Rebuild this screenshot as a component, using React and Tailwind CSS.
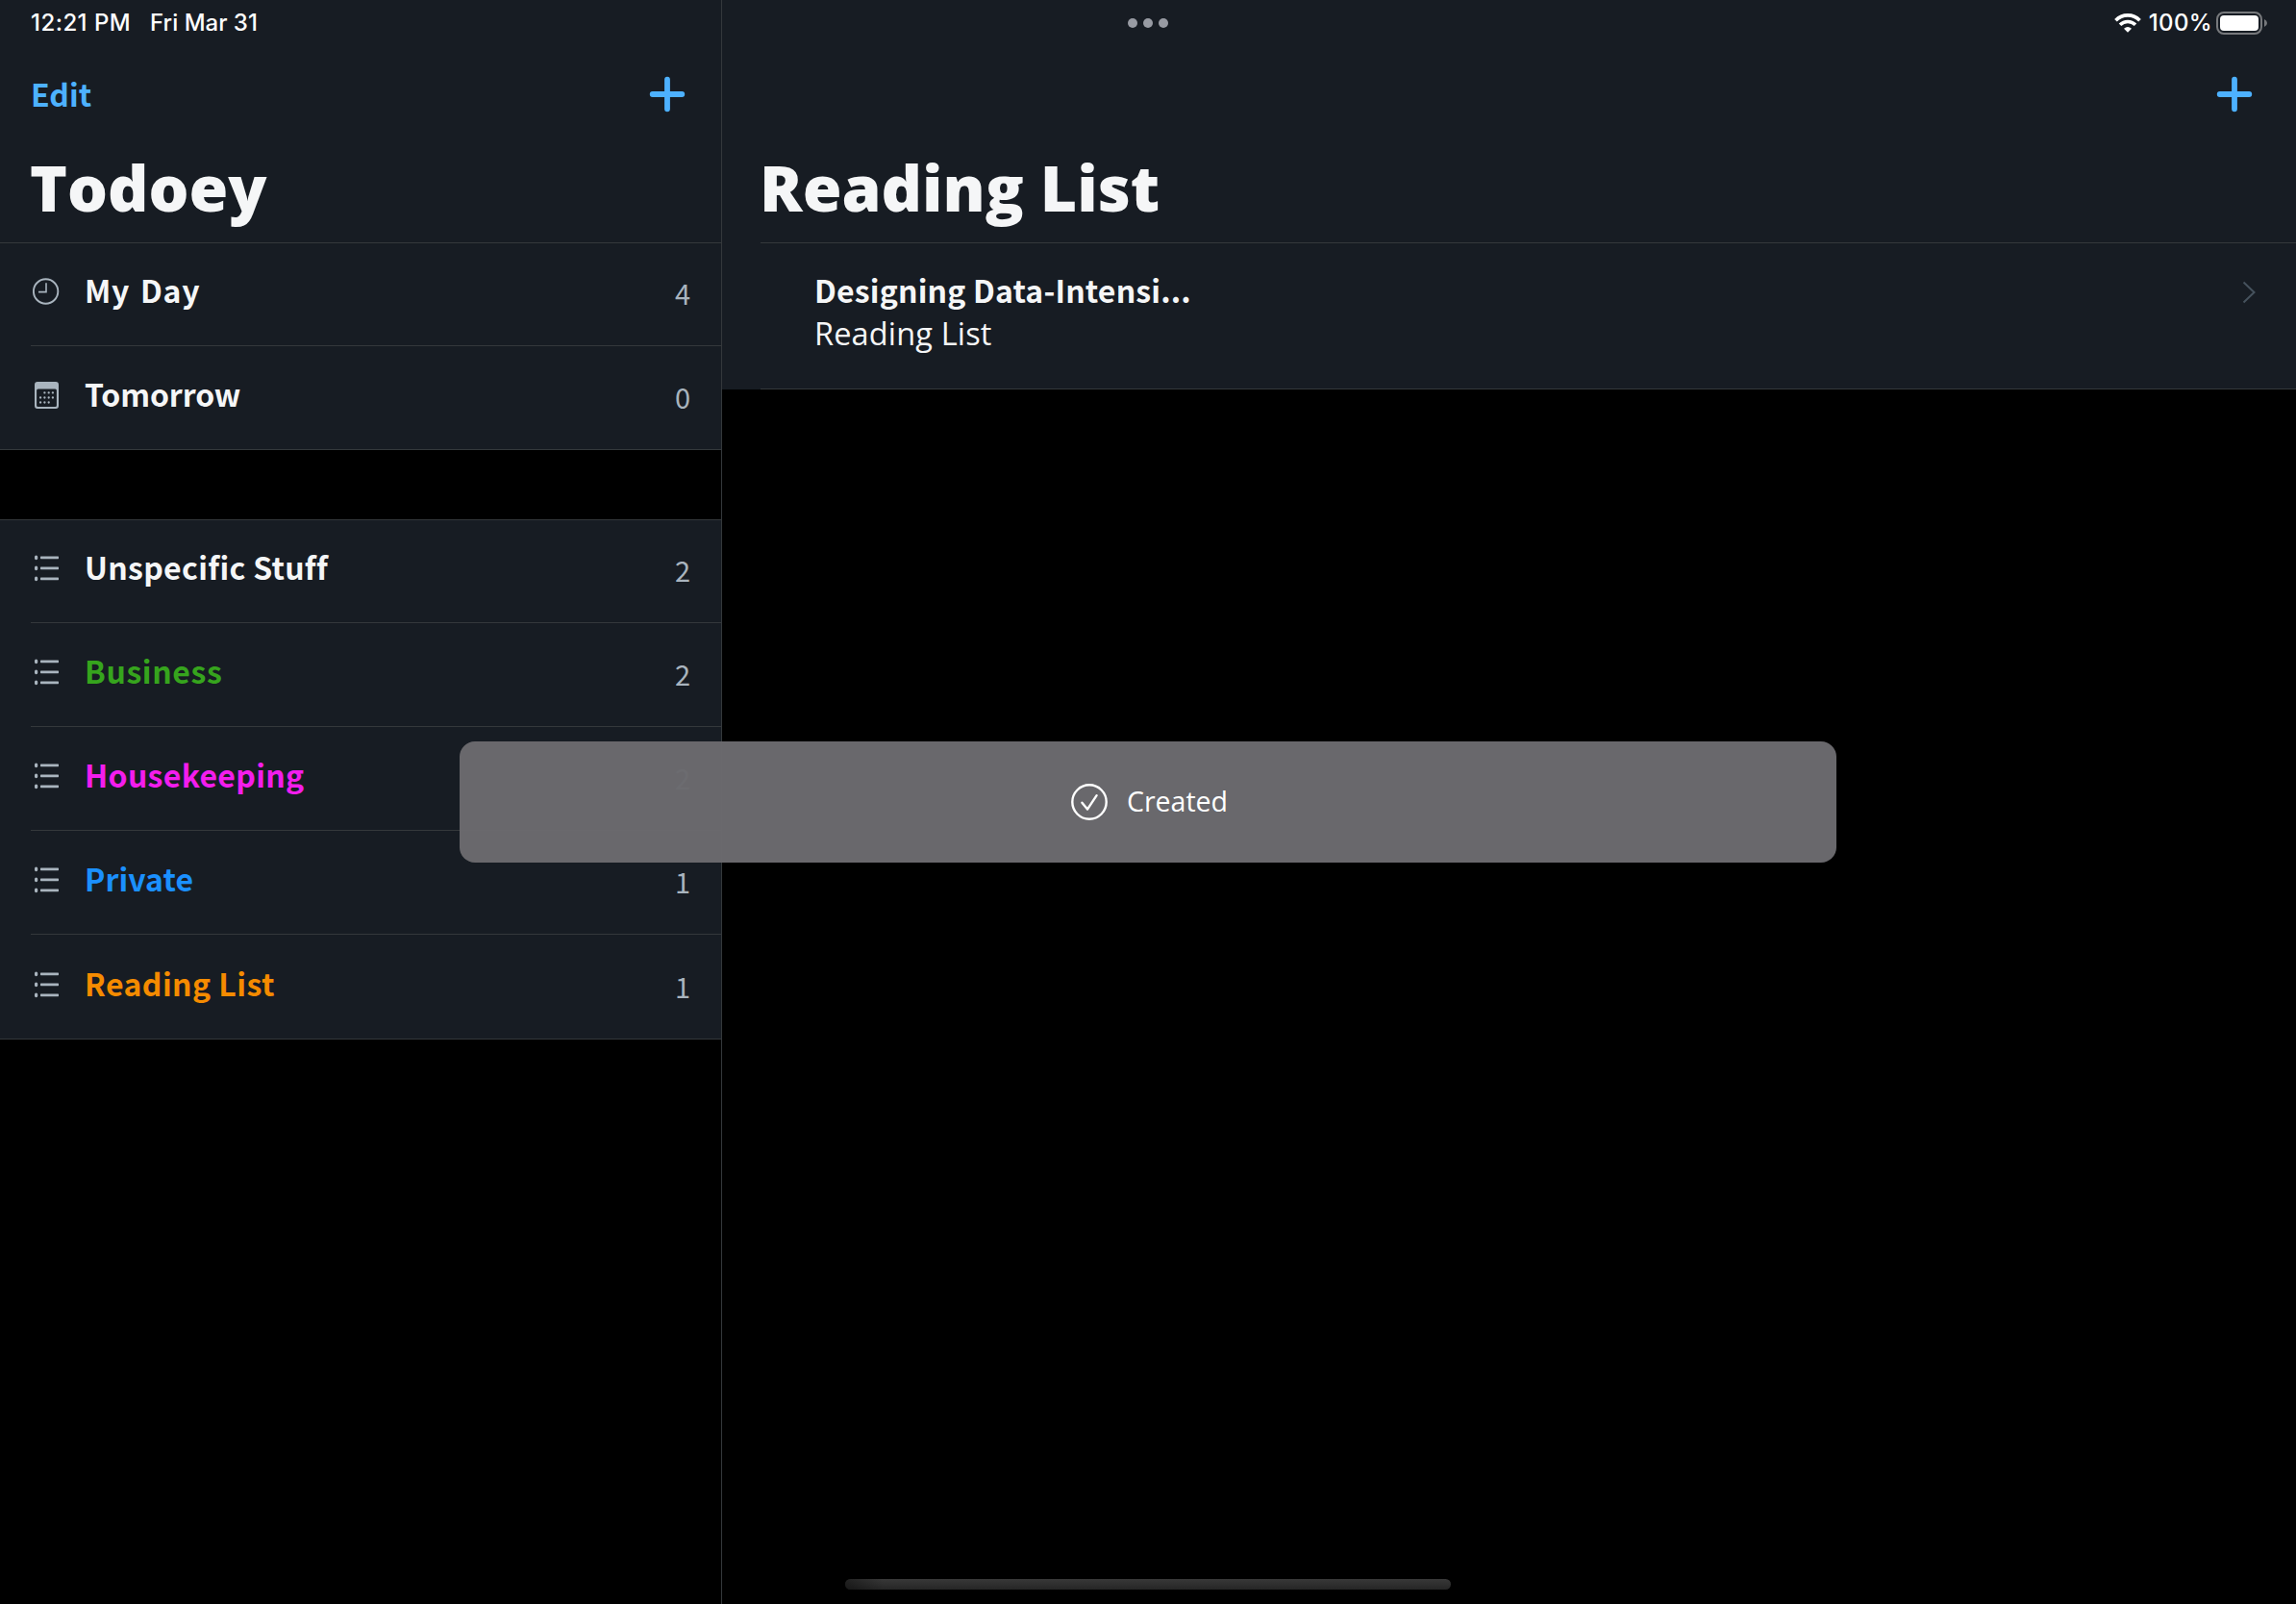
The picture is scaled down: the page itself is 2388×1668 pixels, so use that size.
import React from "react";

const smart = [
  { icon: "clock", label: "My Day", count: 4, height: "h-[107px]", spacing: "tracking-[0.7px] [word-spacing:3px]" },
  { icon: "calendar", label: "Tomorrow", count: 0, height: "h-[108px]", spacing: "tracking-[-0.1px]" },
];

const lists = [
  { label: "Unspecific Stuff", count: 2, color: "text-[#f5f6f7]", height: "h-[107px]", spacing: "tracking-[0.3px]" },
  { label: "Business", count: 2, color: "text-[#36a41d]", height: "h-[108px]", spacing: "tracking-[0.6px]" },
  { label: "Housekeeping", count: 2, color: "text-[#f31ded]", height: "h-[108px]", spacing: "tracking-[0.32px]" },
  { label: "Private", count: 1, color: "text-[#1b90ff]", height: "h-[108px]", spacing: "tracking-[0.1px]" },
  { label: "Reading List", count: 1, color: "text-[#f58b00]", height: "h-[109px]", spacing: "tracking-[0.45px]" },
];

function RowIcon({ name }) {
  const box = "mb-1 h-7 w-7 shrink-0 text-[#a9b4be]";
  if (name === "clock") {
    return (
      <svg className={box} viewBox="0 0 28 28" fill="none" stroke="currentColor">
        <circle cx="13.6" cy="14" r="12.7" strokeWidth="1.9" />
        <path d="M14 5.2V14.6H6" strokeWidth="1.6" />
      </svg>
    );
  }
  if (name === "calendar") {
    const dots = [
      [12.4, 11.4], [16.7, 11.4], [20.9, 11.4],
      [8.1, 16.5], [12.4, 16.5], [16.7, 16.5], [20.9, 16.5],
      [8.1, 21.5], [12.4, 21.5], [16.7, 21.5],
    ];
    return (
      <svg className={box} viewBox="0 0 28 28" fill="currentColor">
        <path
          fillRule="evenodd"
          d="M5 0H24Q27 0 27 3V25Q27 28 24 28H5Q2 28 2 25V3Q2 0 5 0ZM5.6 7.4Q4.1 7.4 4.1 8.9V24.4Q4.1 25.9 5.6 25.9H23.4Q24.9 25.9 24.9 24.4V8.9Q24.9 7.4 23.4 7.4Z"
        />
        {dots.map(([x, y]) => (
          <circle key={`${x}-${y}`} cx={x} cy={y} r="1.15" />
        ))}
      </svg>
    );
  }
  return (
    <svg className={box} viewBox="0 0 28 28" fill="currentColor">
      {[2.8, 13.8, 24.8].map((y) => (
        <g key={y}>
          <rect x="2" y={y - 2.4} width="3.2" height="4.8" rx="1.6" />
          <rect x="8" y={y - 1.4} width="19" height="2.8" rx="0.6" />
        </g>
      ))}
    </svg>
  );
}

function Row({ icon, label, count, color, height, spacing, last }) {
  return (
    <div className={`flex ${height} ${last ? "" : "pl-8"}`}>
      <div
        className={`flex flex-1 items-end border-b border-[#34383b] pr-8 pb-[38px] ${last ? "pl-[34px]" : "pl-0.5"}`}
      >
        <RowIcon name={icon} />
        <span className={`ml-[26px] flex-1 whitespace-nowrap text-[32px] leading-10 font-bold ${color} ${spacing}`}>
          {label}
        </span>
        <span className="-mb-[3px] text-[29px] leading-10 text-[#a9b4be]">{count}</span>
      </div>
    </div>
  );
}

function Plus() {
  return (
    <svg className="h-10 w-10" viewBox="0 0 40 40" stroke="#4db1ff" strokeWidth="5.8" strokeLinecap="round">
      <path d="M4.7 20H35.3M20 4.7V35.3" />
    </svg>
  );
}

function Wifi() {
  return (
    <svg className="h-5 w-7" viewBox="0 0 28 20" fill="none" stroke="#fff" strokeWidth="3.7">
      <path d="M1.5 7.2C8.3 .2 19.7 .2 26.5 7.2" />
      <path d="M6 11.8C10.5 7.4 17.5 7.4 22 11.8" />
      <path d="M14 19.7L10 15.7Q14 12.4 18 15.7Z" fill="#fff" stroke="none" />
    </svg>
  );
}

function Battery() {
  return (
    <svg className="h-6 w-[54px]" viewBox="0 0 54 24">
      <rect x="1" y="1" width="46" height="22" rx="7" fill="none" stroke="#77797c" strokeWidth="2" />
      <rect x="4" y="4" width="40" height="16" rx="4" fill="#fff" />
      <path d="M50 8Q53 9.3 53 12T50 16Z" fill="#77797c" />
    </svg>
  );
}

export default function App() {
  return (
    <div className="relative flex h-[1668px] w-[2388px] overflow-hidden bg-black font-['Noto_Sans_CJK_SC','Open_Sans',sans-serif] text-[#f5f6f7]">
      <aside className="w-[751px] shrink-0 border-r border-[#34383b]">
        <header className="flex h-[252px] flex-col bg-[#171c23]">
          <div className="flex h-12 items-center pl-8 font-['Inter',sans-serif] text-[24px] leading-[30px] font-medium text-white">
            <span className="whitespace-nowrap tracking-[0.45px]">12:21 PM</span>
            <span className="ml-5 whitespace-nowrap">Fri Mar 31</span>
          </div>
          <div className="flex h-[100px] items-center justify-between pr-[36px] pl-8">
            <span className="-mt-0.5 text-[32px] leading-10 font-bold text-[#4db1ff]">Edit</span>
            <Plus />
          </div>
          <h1 className="mt-[6px] pl-[31px] font-['Open_Sans',sans-serif] text-[66px] leading-[80px] font-extrabold whitespace-nowrap">
            Todoey
          </h1>
        </header>
        <section className="border-t border-[#34383b] bg-[#171c23]">
          {smart.map((r, i) => (
            <Row key={r.label} {...r} last={i === smart.length - 1} />
          ))}
        </section>
        <section className="mt-[72px] border-t border-[#34383b] bg-[#171c23]">
          {lists.map((r, i) => (
            <Row key={r.label} {...r} icon="list" last={i === lists.length - 1} />
          ))}
        </section>
      </aside>

      <main className="flex-1">
        <div className="bg-[#171c23]">
          <header className="flex h-[252px] flex-col">
            <div className="flex h-12 items-center pr-[29px] pl-[422px]">
              <div className="flex gap-1.5">
                <i className="h-2.5 w-2.5 rounded-full bg-[#989ba3]" />
                <i className="h-2.5 w-2.5 rounded-full bg-[#989ba3]" />
                <i className="h-2.5 w-2.5 rounded-full bg-[#989ba3]" />
              </div>
              <div className="ml-auto flex items-center">
                <Wifi />
                <span className="ml-2 font-['Inter',sans-serif] text-[24px] leading-[30px] font-medium tracking-[0.35px] text-white">
                  100%
                </span>
                <span className="ml-1">
                  <Battery />
                </span>
              </div>
            </div>
            <div className="flex h-[100px] items-center justify-end pr-11">
              <Plus />
            </div>
            <h1 className="mt-[6px] pl-[39px] font-['Open_Sans',sans-serif] text-[66px] leading-[80px] font-extrabold whitespace-nowrap">
              Reading List
            </h1>
          </header>
          <div className="pl-10">
            <div className="flex h-[153px] justify-between border-t border-b border-[#34383b] pt-[26px] pr-[41px] pl-14">
              <div className="whitespace-nowrap">
                <div className="text-[32px] leading-[45px] font-bold tracking-[0.17px]">Designing Data-Intensi...</div>
                <div className="font-['Open_Sans',sans-serif] text-[32.5px] leading-[45px] tracking-[0.15px]">
                  Reading List
                </div>
              </div>
              <svg className="mt-[13px] h-6 w-4" viewBox="0 0 16 24" fill="none" stroke="#46525d" strokeWidth="2">
                <path d="M2.5 1.5L13.5 12L2.5 22.5" />
              </svg>
            </div>
          </div>
        </div>
      </main>

      <div className="absolute top-[771px] left-[478px] flex h-[126px] w-[1432px] items-center rounded-2xl bg-[#6b6a6e]/98 pl-[636px]">
        <svg className="h-[38px] w-[38px]" viewBox="0 0 38 38" fill="none" stroke="#fff" strokeLinecap="round" strokeLinejoin="round">
          <circle cx="19" cy="19" r="17.7" strokeWidth="2.4" />
          <path d="M11.4 19.7L17 26.6L26.6 12.2" strokeWidth="2.4" />
        </svg>
        <span className="mb-0.5 ml-5 font-['Open_Sans',sans-serif] text-[28.5px] leading-10 text-white">Created</span>
      </div>

      <div className="absolute top-[1642px] left-[879px] h-[11px] w-[630px] rounded-full bg-gradient-to-b from-[#383838] to-[#262626]" />
      <div className="absolute top-[1642px] left-[879px] h-[11px] w-10 rounded-l-full bg-gradient-to-r from-black/40 to-transparent" />
    </div>
  );
}
